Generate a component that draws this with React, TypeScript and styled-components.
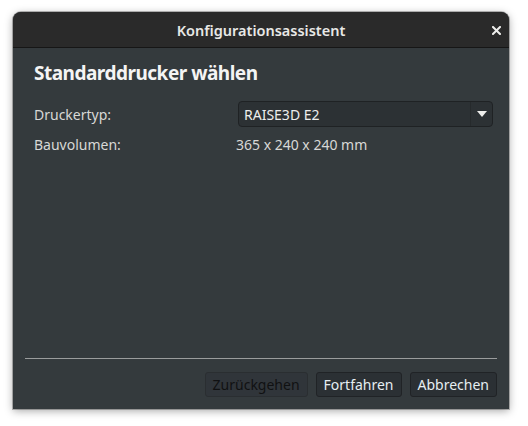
import React from "react";
import styled, { createGlobalStyle } from "styled-components";

const Global = createGlobalStyle`
  html, body { margin: 0; padding: 0; background: #ffffff; }
  body { font-family: "Noto Sans", "DejaVu Sans", sans-serif; }
`;

const Page = styled.div`
  width: 528px;
  height: 426px;
  padding: 12px 0 0 13px;
  box-sizing: border-box;
`;

const Window = styled.div`
  width: 496px;
  height: 397px;
  display: flex;
  flex-direction: column;
  border-radius: 8px 8px 0 0;
  overflow: hidden;
  background: #343a3d;
  box-shadow: 0 2px 8px rgba(0, 0, 0, 0.35), 0 0 0 1px rgba(0, 0, 0, 0.25);
`;

const TitleBar = styled.div`
  height: 35px;
  flex: none;
  display: flex;
  align-items: center;
  justify-content: center;
  position: relative;
  background: #2a2a2a;
  border-bottom: 1px solid #161616;
  color: #e8e8e6;
  font-size: 14.5px;
  font-weight: 600;
`;

const Close = styled.button`
  position: absolute;
  right: 3px;
  top: 8px;
  width: 20px;
  height: 20px;
  padding: 0;
  border: none;
  background: transparent;
  display: flex;
  align-items: center;
  justify-content: center;
`;

const Body = styled.div`
  flex: 1;
  display: flex;
  flex-direction: column;
  padding: 12px 12px 12px 21px;
`;

const Heading = styled.h1`
  margin: 0 0 15px 0;
  font-size: 19px;
  font-weight: 700;
  letter-spacing: -0.5px;
  color: #f4f4f4;
  line-height: 26px;
`;

const Grid = styled.div`
  display: grid;
  grid-template-columns: 201px 258px;
  grid-auto-rows: 26px;
  row-gap: 4px;
  align-items: center;
  color: #d8d8d6;
  font-size: 14px;
`;

const Label = styled.span``;

const Value = styled.span`
  padding-left: 1px;
`;

const Combo = styled.div`
  height: 26px;
  box-sizing: border-box;
  display: flex;
  align-items: center;
  border: 1px solid #1f2224;
  border-radius: 4px;
  background: #2c3134;
  margin-left: 3px;
  color: #eeeeec;
`;

const ComboText = styled.span`
  flex: 1;
  padding-left: 5px;
`;

const ComboArrow = styled.span`
  width: 21px;
  height: 100%;
  border-left: 1px solid #262a2c;
  display: flex;
  align-items: center;
  justify-content: center;
`;

const Spacer = styled.div`
  flex: 1;
`;

const Separator = styled.div`
  height: 1px;
  background: #9a9c9d;
  margin: 0 0 13px -9px;
  width: 472px;
`;

const Buttons = styled.div`
  display: flex;
  justify-content: flex-end;
  gap: 8px;
`;

const Button = styled.div<{ $disabled?: boolean }>`
  height: 25px;
  box-sizing: border-box;
  padding: 0 7px;
  display: flex;
  align-items: center;
  border: 1px solid ${(p) => (p.$disabled ? "#2a2e31" : "#202326")};
  border-radius: 3px;
  background: ${(p) => (p.$disabled ? "#30353a" : "#2b3034")};
  color: ${(p) => (p.$disabled ? "#101112" : "#e6eef2")};
  font-size: 14px;
  cursor: default;
`;

export default function App() {
  return (
    <>
      <Global />
      <Page>
        <Window>
          <TitleBar>
            Konfigurationsassistent
            <Close aria-label="close">
              <svg width="9" height="9" viewBox="0 0 9 9">
                <path d="M1 1 L8 8 M8 1 L1 8" stroke="#eeeeec" strokeWidth="2" strokeLinecap="square" />
              </svg>
            </Close>
          </TitleBar>
          <Body>
            <Heading>Standarddrucker wählen</Heading>
            <Grid>
              <Label>Druckertyp:</Label>
              <Combo>
                <ComboText>RAISE3D E2</ComboText>
                <ComboArrow>
                  <svg width="10" height="6" viewBox="0 0 10 6">
                    <path d="M0 0 L10 0 L5 6 Z" fill="#eeeeec" />
                  </svg>
                </ComboArrow>
              </Combo>
              <Label>Bauvolumen:</Label>
              <Value>365 x 240 x 240 mm</Value>
            </Grid>
            <Spacer />
            <Separator />
            <Buttons>
              <Button role="button" aria-disabled="true" $disabled>Zurückgehen</Button>
              <Button role="button">Fortfahren</Button>
              <Button role="button">Abbrechen</Button>
            </Buttons>
          </Body>
        </Window>
      </Page>
    </>
  );
}
